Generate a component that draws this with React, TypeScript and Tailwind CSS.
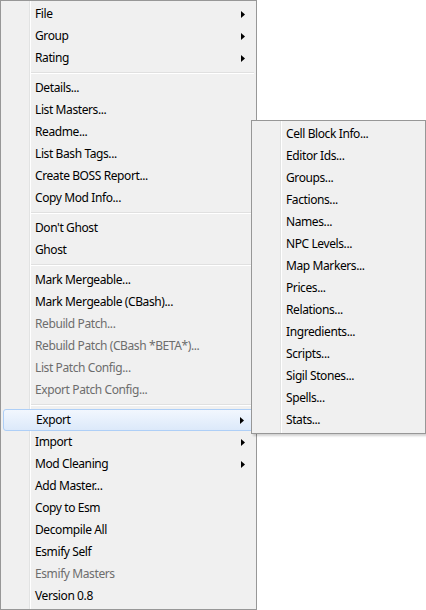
import React from "react";

type Item = { label?: string; sep?: boolean; disabled?: boolean; sub?: boolean; hot?: boolean };

const mainItems: Item[] = [
  { label: "File", sub: true },
  { label: "Group", sub: true },
  { label: "Rating", sub: true },
  { sep: true },
  { label: "Details..." },
  { label: "List Masters..." },
  { label: "Readme..." },
  { label: "List Bash Tags..." },
  { label: "Create BOSS Report..." },
  { label: "Copy Mod Info..." },
  { sep: true },
  { label: "Don't Ghost" },
  { label: "Ghost" },
  { sep: true },
  { label: "Mark Mergeable..." },
  { label: "Mark Mergeable (CBash)..." },
  { label: "Rebuild Patch...", disabled: true },
  { label: "Rebuild Patch (CBash *BETA*)...", disabled: true },
  { label: "List Patch Config...", disabled: true },
  { label: "Export Patch Config...", disabled: true },
  { sep: true },
  { label: "Export", sub: true, hot: true },
  { label: "Import", sub: true },
  { label: "Mod Cleaning", sub: true },
  { label: "Add Master..." },
  { label: "Copy to Esm" },
  { label: "Decompile All" },
  { label: "Esmify Self" },
  { label: "Esmify Masters", disabled: true },
  { label: "Version 0.8" },
];

const subItems: Item[] = [
  "Cell Block Info...",
  "Editor Ids...",
  "Groups...",
  "Factions...",
  "Names...",
  "NPC Levels...",
  "Map Markers...",
  "Prices...",
  "Relations...",
  "Ingredients...",
  "Scripts...",
  "Sigil Stones...",
  "Spells...",
  "Stats...",
].map((l) => ({ label: l }));

function Arrow() {
  return (
    <svg width="4" height="7" viewBox="0 0 4 7" className="block">
      <path d="M0 0 L4 3.5 L0 7 Z" fill="#000" />
    </svg>
  );
}

function MenuRow({ item }: { item: Item }) {
  if (item.sep) {
    return (
      <div className="h-[8px] flex flex-col justify-center pl-[28px] pr-0">
        <div className="h-[1px] bg-[#e0e0e0]" />
        <div className="h-[1px] bg-white" />
      </div>
    );
  }
  return (
    <div
      className={
        "relative h-[22px] flex items-center pl-[32px] pr-[9px] text-[12px] leading-none tracking-[-0.4px] " +
        (item.hot
          ? "rounded-[3px] border border-[#aecff7] bg-gradient-to-b from-[#f2f7fe] to-[#dce9fa] pl-[31px] pr-[8px] "
          : "") +
        (item.disabled ? "text-[#6d6d6d]" : "text-black")
      }
    >
      <span className="flex-1 whitespace-nowrap">{item.label}</span>
      {item.sub && <Arrow />}
    </div>
  );
}

function Menu({ items, className }: { items: Item[]; className: string }) {
  return (
    <div className={"border border-[#979797] bg-[#f0f0f0] p-[2px] " + className}>
      <div className="relative">
        <div className="absolute top-[-2px] bottom-[-2px] left-[26px] w-[2px] border-l border-[#e2e3e3] border-r border-r-white" />
        <div className="relative flex flex-col">
          {items.map((it, i) => (
            <MenuRow key={i} item={it} />
          ))}
        </div>
      </div>
    </div>
  );
}

export default function App() {
  return (
    <div
      className="relative w-[426px] h-[610px] bg-white overflow-hidden"
      style={{ fontFamily: '"Noto Sans", "Open Sans", Arial, sans-serif' }}
    >
      <Menu items={mainItems} className="w-[257px] h-[610px]" />
      <Menu
        items={subItems}
        className="absolute left-[251px] top-[120px] w-[175px] shadow-[2px_2px_2px_rgba(0,0,0,0.18)]"
      />
    </div>
  );
}
